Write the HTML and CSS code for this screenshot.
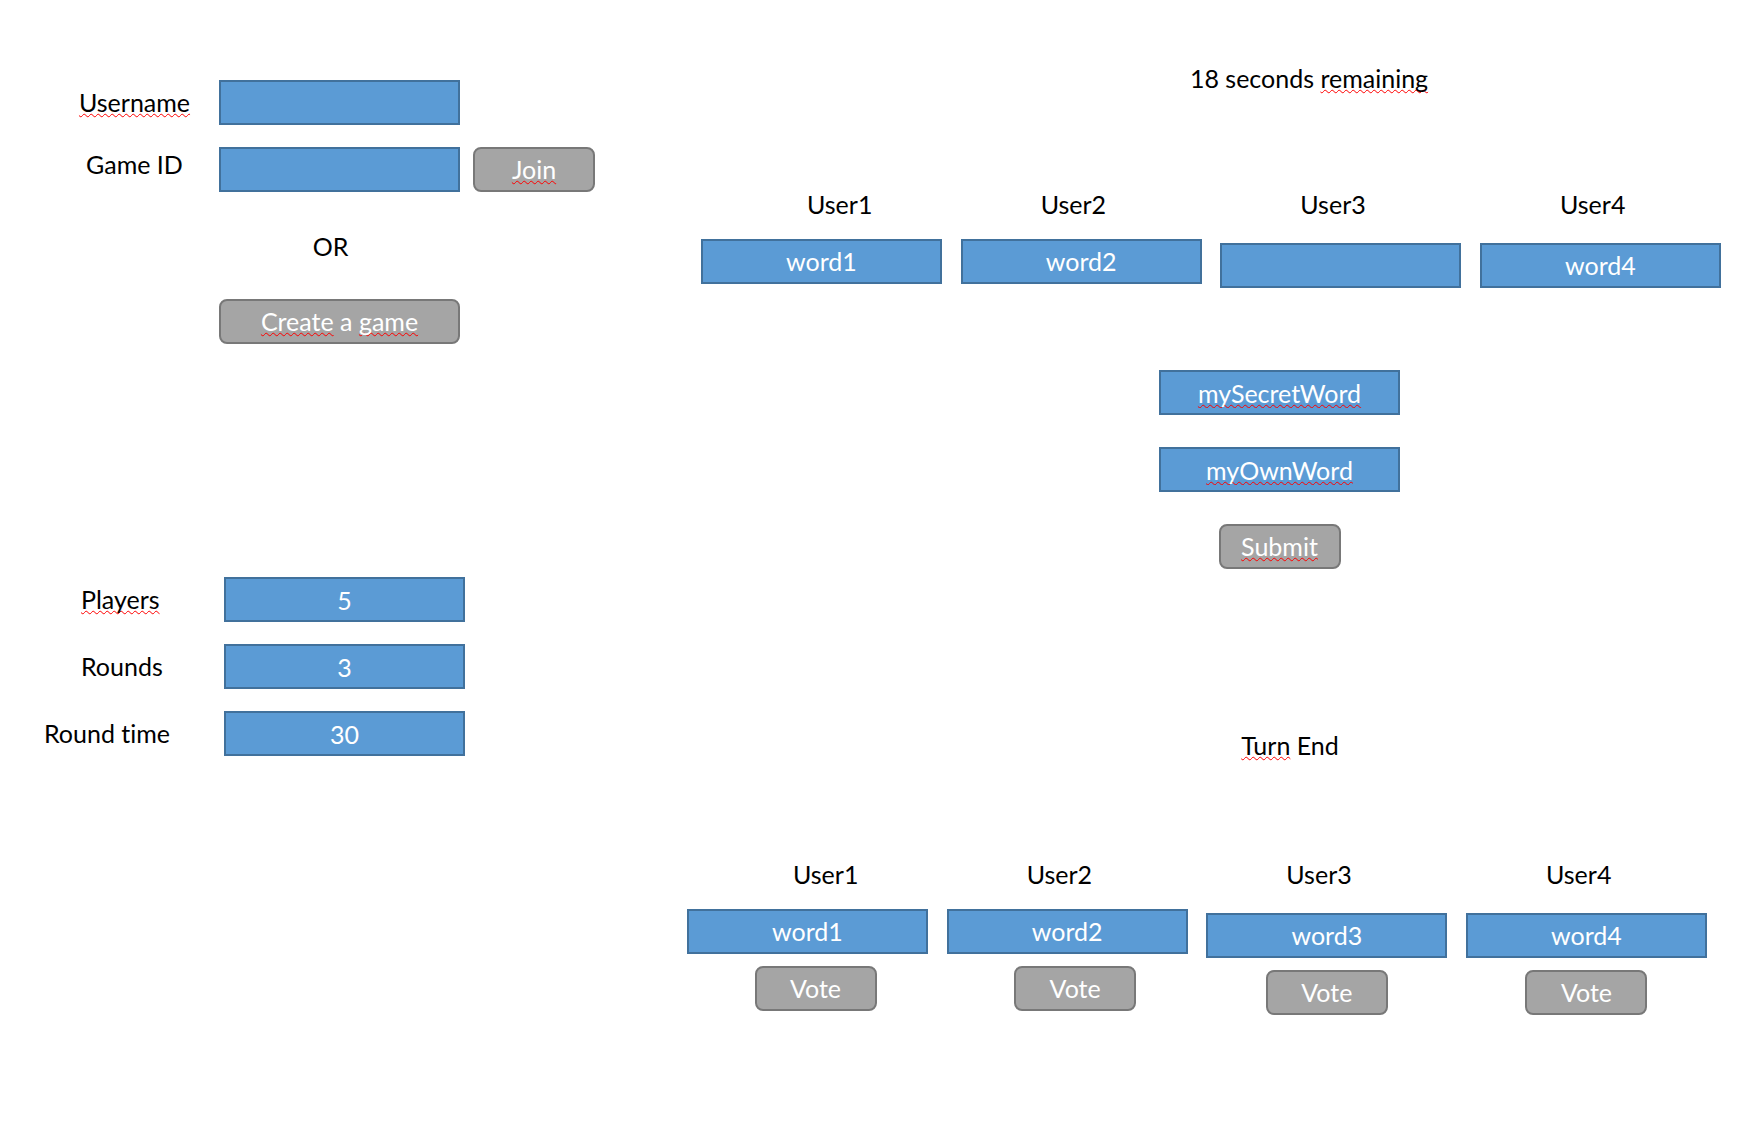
FILE: index.html
```html
<!DOCTYPE html>
<html lang="en">
<head>
  <meta charset="utf-8">
  <meta name="viewport" content="width=device-width, initial-scale=1">
  <title>Word game</title>
  <link rel="stylesheet" href="styles.css">
</head>
<body>
  <main class="page">
    <div class="side">
      <form class="lobby">
        <div class="lobby-row">
          <label class="lobby-label" for="username"><span class="misspelt">Username</span></label>
          <input class="box" id="username" type="text">
        </div>
        <div class="lobby-row">
          <label class="lobby-label lobby-label-top" for="game-id">Game ID</label>
          <input class="box" id="game-id" type="text">
          <button class="button" type="button"><span class="misspelt">Join</span></button>
        </div>
        <p class="or">OR</p>
        <button class="button button-wide" type="button"><span class="misspelt">Create</span> a <span class="misspelt">game</span></button>
      </form>

      <form class="settings">
        <div class="settings-row">
          <label class="settings-label indented" for="players"><span class="misspelt">Players</span></label>
          <input class="box" id="players" type="text" inputmode="numeric" value="5">
        </div>
        <div class="settings-row">
          <label class="settings-label indented" for="rounds">Rounds</label>
          <input class="box" id="rounds" type="text" inputmode="numeric" value="3">
        </div>
        <div class="settings-row">
          <label class="settings-label" for="round-time">Round time</label>
          <input class="box" id="round-time" type="text" inputmode="numeric" value="30">
        </div>
      </form>
    </div>

    <div class="board">
      <section class="turn">
        <p class="timer">18 seconds <span class="misspelt">remaining</span></p>
        <ul class="players">
          <li class="player"><p class="name name-first">User1</p><p class="box">word1</p></li>
          <li class="player"><p class="name">User2</p><p class="box">word2</p></li>
          <li class="player player-low"><p class="name">User3</p><p class="box"></p></li>
          <li class="player player-low"><p class="name">User4</p><p class="box">word4</p></li>
        </ul>
        <form class="guess">
          <input class="box misspelt" type="text" aria-label="Secret word" value="mySecretWord" spellcheck="false">
          <input class="box misspelt" type="text" aria-label="Own word" value="myOwnWord" spellcheck="false">
          <button class="button" type="button"><span class="misspelt">Submit</span></button>
        </form>
      </section>

      <section class="results">
        <h2 class="results-title"><span class="misspelt">Turn</span> End</h2>
        <ul class="players">
          <li class="player"><p class="name name-first">User1</p><p class="box">word1</p><button class="button vote vote-right" type="button">Vote</button></li>
          <li class="player"><p class="name">User2</p><p class="box">word2</p><button class="button vote vote-right" type="button">Vote</button></li>
          <li class="player player-low"><p class="name">User3</p><p class="box">word3</p><button class="button vote" type="button">Vote</button></li>
          <li class="player player-low"><p class="name">User4</p><p class="box">word4</p><button class="button vote" type="button">Vote</button></li>
        </ul>
      </section>
    </div>
  </main>
</body>
</html>
```
FILE: styles.css
```css
* {
  box-sizing: border-box;
}

body,
p,
h2,
ul {
  margin: 0;
  padding: 0;
}

body {
  background: #fff;
  color: #000;
  font: 400 25px/45px Lato, "Open Sans", sans-serif;
  font-variant-ligatures: none;
}

.page {
  display: grid;
  grid-template-columns: 640px 1fr;
  padding-bottom: 100px;
}

/* Shared controls */
.box {
  width: 241px;
  height: 45px;
  padding: 0;
  border: 2px solid #41719c;
  border-radius: 0;
  background: #5b9bd5;
  color: #fff;
  font: inherit;
  line-height: 41px;
  text-align: center;
}

.button {
  width: 122px;
  height: 45px;
  padding: 0;
  border: 2px solid #787878;
  border-radius: 8px;
  background: #a5a5a5;
  color: #fff;
  font: inherit;
  line-height: 41px;
  text-align: center;
}

.button-wide {
  width: 241px;
}

.misspelt {
  text-decoration: underline wavy #f00 1px;
  text-decoration-skip-ink: none;
  text-underline-offset: 1px;
}

/* Join or create */
.side {
  padding-top: 80px;
}

.lobby {
  display: flex;
  flex-direction: column;
  padding-left: 75px;
}

.lobby-row {
  display: grid;
  grid-template-columns: 131px 241px 122px;
  column-gap: 13px;
  margin-bottom: 22px;
}

.lobby-label {
  padding-right: 12px;
  text-align: center;
}

.lobby-label-top {
  line-height: 34px;
}

.or {
  width: 241px;
  margin: 10px 0 30px 144px;
  padding-right: 18px;
  text-align: center;
}

.lobby .button-wide {
  margin-left: 144px;
}

/* Game settings */
.settings {
  display: grid;
  row-gap: 22px;
  margin-top: 233px;
  padding-left: 44px;
}

.settings-row {
  display: grid;
  grid-template-columns: 180px 241px;
}

.indented {
  padding-left: 37px;
}

/* Turn in progress */
.board {
  padding-top: 56px;
}

.turn {
  padding: 0 35px 0 61px;
}

.timer {
  margin-bottom: 81px;
  padding-left: 196px;
  text-align: center;
}

.players {
  display: flex;
  justify-content: space-between;
  list-style: none;
}

.player {
  display: flex;
  flex-direction: column;
  row-gap: 12px;
}

.player-low .name {
  margin-bottom: 4px;
}

.name {
  padding-left: 80px;
}

.name-first {
  padding-left: 106px;
}

.guess {
  display: flex;
  flex-direction: column;
  align-items: center;
  row-gap: 32px;
  margin-top: 82px;
  padding-left: 137px;
}

/* End of turn */
.results {
  margin-top: 154px;
  padding: 0 49px 0 47px;
}

.results-title {
  margin-bottom: 84px;
  padding-left: 186px;
  font: inherit;
  text-align: center;
}

.vote {
  align-self: center;
}

.vote-right {
  margin-left: 16px;
}
```
